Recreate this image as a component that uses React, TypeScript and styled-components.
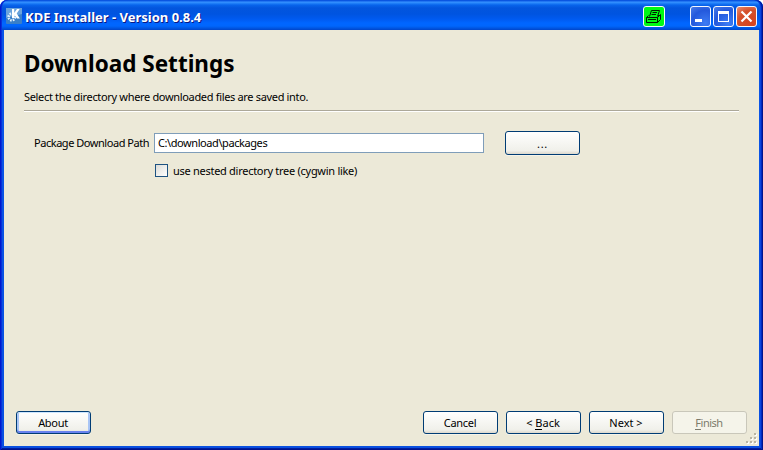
import React from "react";
import styled, { createGlobalStyle, css } from "styled-components";

const GlobalStyle = createGlobalStyle`
  * { box-sizing: border-box; }
  html, body { margin: 0; padding: 0; overflow: hidden; background: #fff; }
`;

const Window = styled.div`
  position: relative;
  display: flex;
  flex-direction: column;
  width: 763px;
  height: 450px;
  border-radius: 7px 7px 0 0;
  overflow: hidden;
  background: linear-gradient(#0a55e8, #0a50e0);
  font-family: "Noto Sans", "DejaVu Sans", sans-serif;
  font-size: 11px;
  color: #000;
`;

const TitleBar = styled.header`
  display: flex;
  align-items: flex-start;
  flex: none;
  height: 30px;
  padding: 6px 6px 0 6px;
  background: linear-gradient(
    #0a50dc 0px, #0a5ae6 1px, #3a93ff 2px, #2585fb 3px, #0864ec 5px, #0355dd 8px,
    #0054e0 14px, #005af0 19px, #0066ff 23px, #0066fd 26px, #0057e4 28px, #0045c9 30px
  );
`;

const AppIcon = styled.svg`
  flex: none;
  width: 16px;
  height: 16px;
  margin-top: 2px;
`;

const Caption = styled.h1`
  flex: 1;
  margin: 1px 0 0 3px;
  font: bold 13px/20px "Noto Sans", sans-serif;
  color: #fff;
  text-shadow: 1px 1px 0 #0a1883;
  white-space: nowrap;
`;

const TitleButtons = styled.div`
  display: flex;
  gap: 2px;
`;

const titleFace = {
  print: css`width: 22px; background: #00fa14; margin-right: 23px;`,
  blue: css`background: radial-gradient(circle at 75% 85%, #3d7cf4 0, #2459dc 60%, #4a7ee9 100%);`,
  close: css`background: radial-gradient(circle at 75% 85%, #d8441e 0, #d4512c 60%, #ec8e72 100%);`,
};

const TitleButton = styled.button<{ $face: keyof typeof titleFace }>`
  width: 21px;
  height: 21px;
  padding: 0;
  border: 1px solid #f4f8ff;
  border-radius: 3px;
  ${(p) => titleFace[p.$face]}
  svg { display: block; width: 19px; height: 19px; }
`;

const Client = styled.main`
  display: flex;
  flex-direction: column;
  flex: 1;
  margin: 0 4px 4px;
  padding: 0 12px 12px;
  background: #ece9d8;
`;

const Frame = styled.div`
  position: absolute;
  inset: 0;
  pointer-events: none;
  border-radius: 7px 7px 0 0;
  box-shadow: inset 1px 0 #0019cf, inset -1px 0 #00138c, inset 0 -1px #00138c,
    inset 2px 0 #0831d9, inset -2px 0 #0029c0, inset 0 -2px #001ea0, inset -3px 0 #0a44dd;
`;

const Heading = styled.h2`
  margin: 18px 0 0 8px;
  font: bold 22.5px/32px "Noto Sans", sans-serif;
  white-space: nowrap;
`;

const Intro = styled.p`
  margin: 9px 0 0 8px;
  line-height: 16px;
  white-space: nowrap;
`;

const Rule = styled.hr`
  width: 715px;
  height: 2px;
  margin: 5px 0 0 8px;
  border: 0;
  border-top: 1px solid #aca899;
  border-bottom: 1px solid #fff;
`;

const Form = styled.div`
  display: grid;
  grid-template-columns: 115px 330px 75px;
  grid-template-rows: 24px 16px;
  row-gap: 8px;
  align-items: center;
  margin: 19px 0 0 18px;
`;

const Label = styled.label`
  line-height: 16px;
  white-space: nowrap;
`;

const PathInput = styled.input`
  width: 330px;
  height: 20px;
  margin-left: 5px;
  padding: 0 2px 2px 3px;
  border: 1px solid #7f9db9;
  border-radius: 0;
  outline: 0;
  background: #fff;
  font: 11px "Noto Sans", sans-serif;
  letter-spacing: -0.42px;
  color: #000;
`;

const CheckLine = styled.label`
  grid-column: 2 / 4;
  display: flex;
  align-items: center;
  gap: 5px;
  margin-left: 6px;
  line-height: 16px;
  white-space: nowrap;
`;

const CheckBox = styled.input`
  appearance: none;
  width: 13px;
  height: 13px;
  margin: -1px 0 0;
  border: 1px solid #1d5281;
  background: linear-gradient(135deg, #dcdcd7, #fff);
`;

const Text = styled.span<{ $spacing?: number }>`
  letter-spacing: ${(p) => p.$spacing ?? 0}px;
`;

const buttonKind = {
  normal: css``,
  focused: css`box-shadow: inset 0 1px #cee7ff, inset 0 -2px #6982ee, inset 2px 0 #a9c5f5, inset -2px 0 #a9c5f5, 0 1px #f5f3e9;`,
  disabled: css`
    border-color: #c9c7ba;
    background: #f5f4ea;
    color: #7d7b6c;
    box-shadow: none;
  `,
};

const PushButton = styled.button<{ $kind?: keyof typeof buttonKind; $tall?: boolean }>`
  width: 75px;
  height: ${(p) => (p.$tall ? 24 : 23)}px;
  padding: 0 1px 0 0;
  border: 1px solid #003c74;
  border-radius: 3px;
  background: linear-gradient(#fff, #f6f6f2 50%, #f0f0ea 85%, #dcd8cd);
  box-shadow: 0 1px #f5f3e9;
  font: 11px/21px "Noto Sans", sans-serif;
  color: #000;
  ${(p) => buttonKind[p.$kind ?? "normal"]}
`;

const BrowseButton = styled(PushButton)`
  margin-left: 26px;
  padding-left: 1px;
  letter-spacing: 0.7px;
`;

const Mnemonic = styled.span`
  border-bottom: 1px solid currentColor;
  display: inline-block;
  line-height: 12px;
`;

const Footer = styled.footer`
  display: flex;
  gap: 8px;
  margin-top: auto;
`;

const Spacer = styled.div`
  flex: 1;
`;

const Grip = styled.svg`
  position: absolute;
  right: 5px;
  bottom: 5px;
  width: 12px;
  height: 12px;
`;

const gripDots = [[8, 0], [4, 4], [8, 4], [0, 8], [4, 8], [8, 8]];

export default function App() {
  return (
    <>
      <GlobalStyle />
      <Window>
        <TitleBar>
          <AppIcon viewBox="0 0 16 16">
            <rect width="16" height="16" rx="1" fill="#397fc8" />
            <path d="M0 0h16v6L0 10z" fill="#6aa3dc" />
            <circle cx="5.800" cy="9" r="3.200" fill="none" stroke="#e3f0fc" strokeWidth="2.600" strokeDasharray="1.500 1" />
            <path d="M6 1h2.200v4L11 1h2.700l-3 4.400 3.200 5H11L8.200 6.500V10H6z" fill="#fff" />
          </AppIcon>
          <Caption>KDE Installer - Version 0.8.4</Caption>
          <TitleButtons>
            <TitleButton $face="print" aria-label="Print">
              <svg viewBox="0 0 19 19" fill="none" stroke="#001c00" strokeWidth="1">
                <path d="M5.500 9.500L7.500 3.500H15.500L13.500 9.500M8.500 5.500H13M7.500 7.500H12M2.500 10.500L4.500 8.500M2.500 10.500H13.500V15.500H2.500ZM13.500 10.500L16.500 7.500V12.500L13.500 15.500M4 12.500H12M14 8.500H16" />
              </svg>
            </TitleButton>
            <TitleButton $face="blue" aria-label="Minimize">
              <svg viewBox="0 0 19 19"><path d="M4 12h7v3H4z" fill="#fff" /></svg>
            </TitleButton>
            <TitleButton $face="blue" aria-label="Maximize">
              <svg viewBox="0 0 19 19"><path fillRule="evenodd" d="M4 4h11v11H4zM5 7v7h9V7z" fill="#fff" /></svg>
            </TitleButton>
            <TitleButton $face="close" aria-label="Close">
              <svg viewBox="0 0 19 19"><path d="M4.500 4.500l10 10M14.500 4.500l-10 10" stroke="#fff" strokeWidth="2.200" /></svg>
            </TitleButton>
          </TitleButtons>
        </TitleBar>
        <Client>
          <Heading>Download Settings</Heading>
          <Intro><Text $spacing={-0.33}>Select the directory where downloaded files are saved into.</Text></Intro>
          <Rule />
          <Form>
            <Label><Text $spacing={-0.46}>Package Download Path</Text></Label>
            <PathInput defaultValue="C:\download\packages" />
            <BrowseButton $tall>...</BrowseButton>
            <CheckLine>
              <CheckBox type="checkbox" />
              <Text $spacing={-0.28}>use nested directory tree (cygwin like)</Text>
            </CheckLine>
          </Form>
          <Footer>
            <PushButton $kind="focused"><Text $spacing={-0.3}>About</Text></PushButton>
            <Spacer />
            <PushButton><Text $spacing={-0.3}>Cancel</Text></PushButton>
            <PushButton>&lt; <Mnemonic>B</Mnemonic>ack</PushButton>
            <PushButton>Next &gt;</PushButton>
            <PushButton $kind="disabled" disabled>
              <Text $spacing={-0.5}><Mnemonic>F</Mnemonic>inish</Text>
            </PushButton>
          </Footer>
        </Client>
        <Frame />
        <Grip viewBox="0 0 12 12">
          {gripDots.map(([x, y]) => (
            <g key={`${x}-${y}`}>
              <rect x={x + 1} y={y + 1} width="2" height="2" fill="#fff" />
              <rect x={x} y={y} width="2" height="2" fill="#b8b4a3" />
            </g>
          ))}
        </Grip>
      </Window>
    </>
  );
}
